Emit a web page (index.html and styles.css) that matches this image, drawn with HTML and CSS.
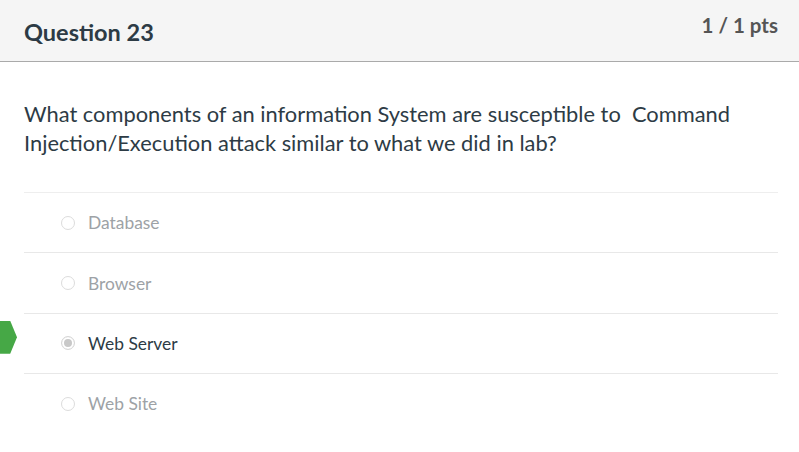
FILE: index.html
```html
<!DOCTYPE html>
<html lang="en">
<head>
  <meta charset="UTF-8" />
  <title>Question 23</title>
  <link rel="stylesheet" href="styles.css">
</head>
<body>
  <div class="question">
    <header class="question-header">
      <h2 class="question-title">Question 23</h2>
      <div class="question-points">1 / 1 pts</div>
    </header>

    <div class="question-text">
      What components of an information System are susceptible to &nbsp;Command Injection/Execution attack similar to what we did in lab?
    </div>

    <div class="answers">
      <label class="answer">
        <span class="radio"></span>
        <span class="answer-text">Database</span>
      </label>
      <label class="answer">
        <span class="radio"></span>
        <span class="answer-text">Browser</span>
      </label>
      <label class="answer selected">
        <span class="marker"></span>
        <span class="radio"></span>
        <span class="answer-text">Web Server</span>
      </label>
      <label class="answer">
        <span class="radio"></span>
        <span class="answer-text">Web Site</span>
      </label>
    </div>
  </div>
</body>
</html>
```

FILE: styles.css
```css
body {
  margin: 0;
  font-family: Lato, 'Liberation Sans', sans-serif;
  background: #fff;
  color: #2d3b45;
}
.question-header {
  display: flex;
  justify-content: space-between;
  align-items: flex-start;
  height: 61px;
  padding: 0 21px 0 24px;
  background: #f5f5f5;
  border-bottom: 1px solid #aaa;
}
.question-title {
  margin: 16px 0 0;
  font-size: 23.5px;
  line-height: 32px;
  font-weight: 700;
  color: #2d3b45;
}
.question-points {
  margin-top: 11px;
  font-size: 20.5px;
  line-height: 28px;
  font-weight: 700;
  color: #555;
}
.question-text {
  padding: 37px 24px 0;
  font-size: 21.85px;
  line-height: 29px;
  height: 93px;
}
.answers {
  margin: 0 21px 0 24px;
}
.answer {
  position: relative;
  display: flex;
  align-items: center;
  height: 59.4px;
  border-top: 1px solid #e8e8e8;
  font-size: 17.4px;
  color: #9da2a6;
}
.answer:first-child {
  border-top-color: #eeeeee;
}
.radio {
  width: 14px;
  height: 14px;
  margin-left: 37px;
  margin-right: 13px;
  border: 1px solid #dcdcdc;
  border-radius: 50%;
  box-sizing: border-box;
  background: #fff;
}
.selected {
  color: #2d3b45;
}
.selected .radio {
  border-color: #d6d6d6;
  box-shadow: inset 0 0 0 2px #fff, inset 0 0 0 6px #c8c8c8;
}
.marker {
  position: absolute;
  left: -24px;
  top: 7px;
  width: 17px;
  height: 33px;
  background: #46a846;
  clip-path: polygon(0 0, 60% 0, 100% 50%, 60% 100%, 0 100%);
}
```
